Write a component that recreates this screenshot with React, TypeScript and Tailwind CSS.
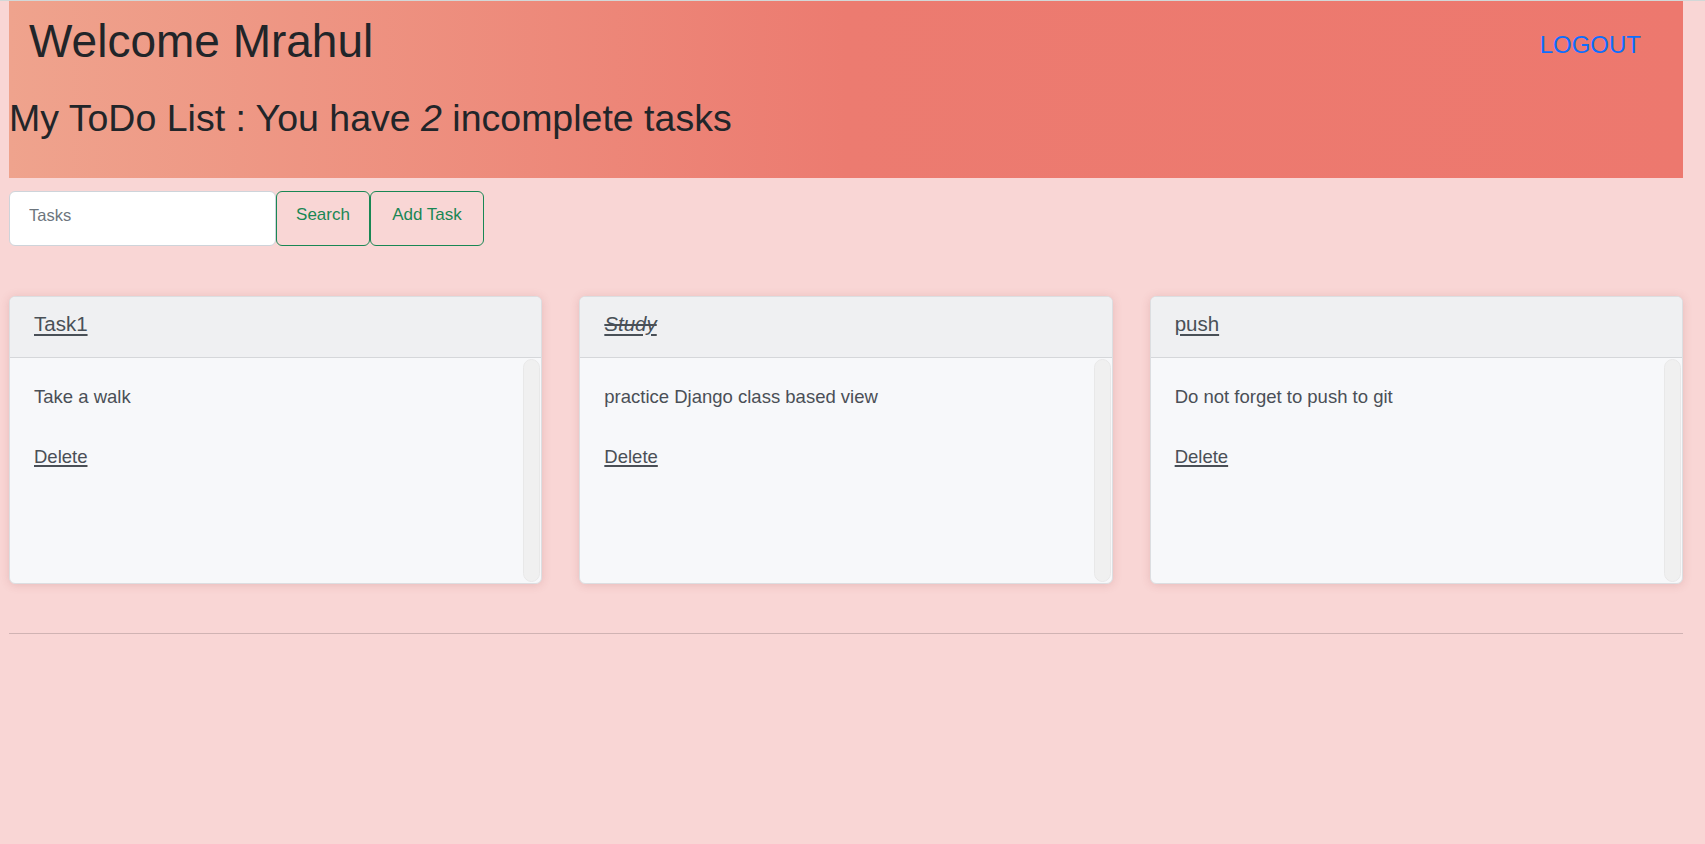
import React from "react";

type Task = {
  title: string;
  description: string;
  complete: boolean;
};

const tasks: Task[] = [
  { title: "Task1", description: "Take a walk", complete: false },
  { title: "Study", description: "practice Django class based view", complete: true },
  { title: "push", description: "Do not forget to push to git", complete: false },
];

const TaskCard = ({ task }: { task: Task }) => {
  return (
    <div className="flex h-[288px] flex-col overflow-hidden rounded-[6px] border border-[#dcdee1] bg-[#f7f8fa] shadow-[0_1px_10px_rgba(150,60,60,0.18)]">
      <div className="h-[61px] shrink-0 border-b border-[#d5d7da] bg-[#eff0f2] px-[24px] pt-[17px]">
        <a
          href="#"
          className={
            task.complete
              ? "text-[20.5px] leading-[20px] text-[#495057] italic [text-decoration-line:underline_line-through] decoration-2 underline-offset-[3px]"
              : "text-[20.5px] leading-[20px] text-[#495057] underline decoration-2 underline-offset-[3px]"
          }
        >
          {task.title}
        </a>
      </div>
      <div className="flex flex-1">
        <div className="flex-1 px-[24px] pt-[30px]">
          <p className="text-[18.5px] leading-[18px] text-[#4a4f56]">{task.description}</p>
          <a
            href="#"
            className="mt-[42px] inline-block text-[18.5px] leading-[18px] text-[#4a4f56] underline decoration-2 underline-offset-[2px]"
          >
            Delete
          </a>
        </div>
        <div className="my-[1px] mr-[1px] w-[17px] rounded-full border border-[#e8e8e8] bg-[#f0f0f0]" />
      </div>
    </div>
  );
};

export default function App() {
  const incomplete = tasks.filter((t) => !t.complete).length;

  return (
    <div className="min-h-screen border-t border-[#d2d8d8] bg-[#f9d6d5] font-['Liberation_Sans',Arial,sans-serif] text-[#212529]">
      <div className="ml-[9px] w-[1674px]">
        {/* header */}
        <div className="flex h-[177px] flex-col bg-[linear-gradient(to_right,#efa38d_0%,#ec7b70_50%,#ed786e_100%)]">
          <div className="flex items-start justify-between">
            <h1 className="pl-[20px] pt-[17px] text-[46px] leading-[46px]">Welcome Mrahul</h1>
            <a href="#" className="pr-[42px] pt-[32px] text-[24px] leading-[24px] text-[#0d6efd]">
              LOGOUT
            </a>
          </div>
          <h2 className="mt-[36px] text-[37.5px] leading-[37.5px]">
            My ToDo List : You have <i>{incomplete}</i> incomplete tasks
          </h2>
        </div>

        {/* search */}
        <form className="mt-[13px] flex" onSubmit={(e) => e.preventDefault()}>
          <input
            type="text"
            placeholder="Tasks"
            className="h-[55px] w-[267px] rounded-[6px] border border-[#ced4da] bg-white px-[19px] pb-[6px] text-[16.5px] outline-none placeholder:text-[#6c757d]"
          />
          <button className="h-[55px] w-[94px] rounded-[6px] border border-[#198754] pb-[7px] text-[17px] text-[#198754]">
            Search
          </button>
          <button className="h-[55px] w-[114px] rounded-[6px] border border-[#198754] pb-[7px] text-[17px] text-[#198754]">
            Add Task
          </button>
        </form>

        {/* tasks */}
        <div className="mt-[50px] grid grid-cols-3 gap-[37px]">
          {tasks.map((t) => (
            <TaskCard key={t.title} task={t} />
          ))}
        </div>

        <hr className="mt-[49px] border-t border-[#d0b3b3]" />
      </div>
    </div>
  );
}
